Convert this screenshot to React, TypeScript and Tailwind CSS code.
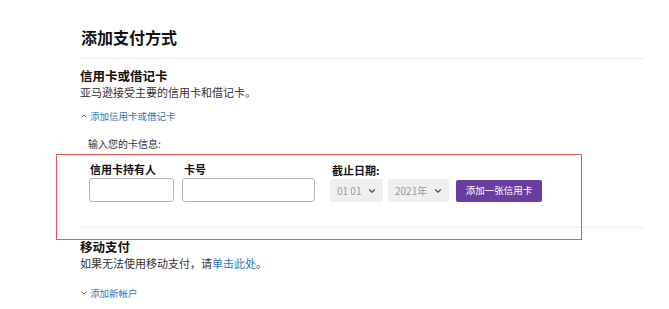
import React from 'react'
import { ChevronDown, ChevronUp } from 'lucide-react'

const font = { fontFamily: '"Noto Sans CJK SC", "Noto Sans", sans-serif' }

const SelectBox: React.FC<{ label: string; width: string }> = ({ label, width }) => {
    return (
        <div className={`${width} h-[23px] bg-[#efefef] rounded-[2px] flex items-center justify-between pl-[7px] pr-[6px] text-[10px] text-[#9a9a9a]`}>
            <span>{label}</span>
            <ChevronDown size={10} strokeWidth={3} className="text-[#555]" />
        </div>
    )
}

const App: React.FC = () => {
    return (
        <div className="relative w-[669px] h-[309px] bg-white overflow-hidden text-[#111]" style={font}>
            <div className="pl-[80px] pt-[26px] w-[644px]">
                <h1 className="text-[16px] font-bold leading-[22px] pl-px">添加支付方式</h1>
                <div className="mt-[10px] h-px bg-[#ececec]" />

                <h2 className="mt-[9px] text-[12.5px] font-bold leading-[16px]">信用卡或借记卡</h2>
                <p className="mt-px text-[11px] leading-[14px] text-[#333]">亚马逊接受主要的信用卡和借记卡。</p>
                <div className="mt-[11px] flex items-center gap-[2px] text-[9.5px] leading-[12px] text-[#2f7ab8]">
                    <ChevronUp size={8} strokeWidth={3} className="text-[#777]" />
                    <span>添加信用卡或借记卡</span>
                </div>

                <p className="mt-[15px] ml-[8px] text-[10px] leading-[13px] text-[#333]">输入您的卡信息:</p>

                <div className="mt-[12px] ml-[9px] flex items-end gap-[8px]">
                    <div className="flex flex-col">
                        <span className="text-[11px] font-bold leading-[14px] pl-px">信用卡持有人</span>
                        <div className="mt-[2px] w-[85px] h-[24px] border border-[#b5b5b5] rounded-[3px]" />
                    </div>
                    <div className="flex flex-col">
                        <span className="text-[11px] font-bold leading-[14px] pl-[2px]">卡号</span>
                        <div className="mt-[2px] w-[133px] h-[24px] border border-[#b5b5b5] rounded-[3px]" />
                    </div>
                    <div className="flex flex-col ml-[7px]">
                        <span className="text-[11px] font-bold leading-[14px] pl-[2px]">截止日期:</span>
                        <div className="mt-[2px] flex items-center gap-[5px]">
                            <SelectBox label="01 01" width="w-[53px]" />
                            <SelectBox label="2021年" width="w-[61px]" />
                            <button className="ml-[2px] w-[86px] h-[22px] bg-[#6a3ea1] text-white text-[9.5px] rounded-[2px]">添加一张信用卡</button>
                        </div>
                    </div>
                </div>

                <div className="mt-[25px] h-px bg-[#ececec]" />

                <h2 className="mt-[11px] text-[12.5px] font-bold leading-[16px]">移动支付</h2>
                <p className="mt-px text-[11px] leading-[14px] text-[#333]">
                    如果无法使用移动支付，请<span className="text-[#2f7ab8]">单击此处</span>。
                </p>
                <div className="mt-[17px] flex items-center gap-[2px] text-[9.5px] leading-[12px] text-[#2f7ab8]">
                    <ChevronDown size={8} strokeWidth={3} className="text-[#777]" />
                    <span>添加新帐户</span>
                </div>
            </div>

            {/* annotation box drawn over the screenshot */}
            <div className="absolute left-[56px] top-[154px] w-[526px] h-[86px] border-[1.5px] border-[#e25a5a]" />
        </div>
    )
}

export default App
